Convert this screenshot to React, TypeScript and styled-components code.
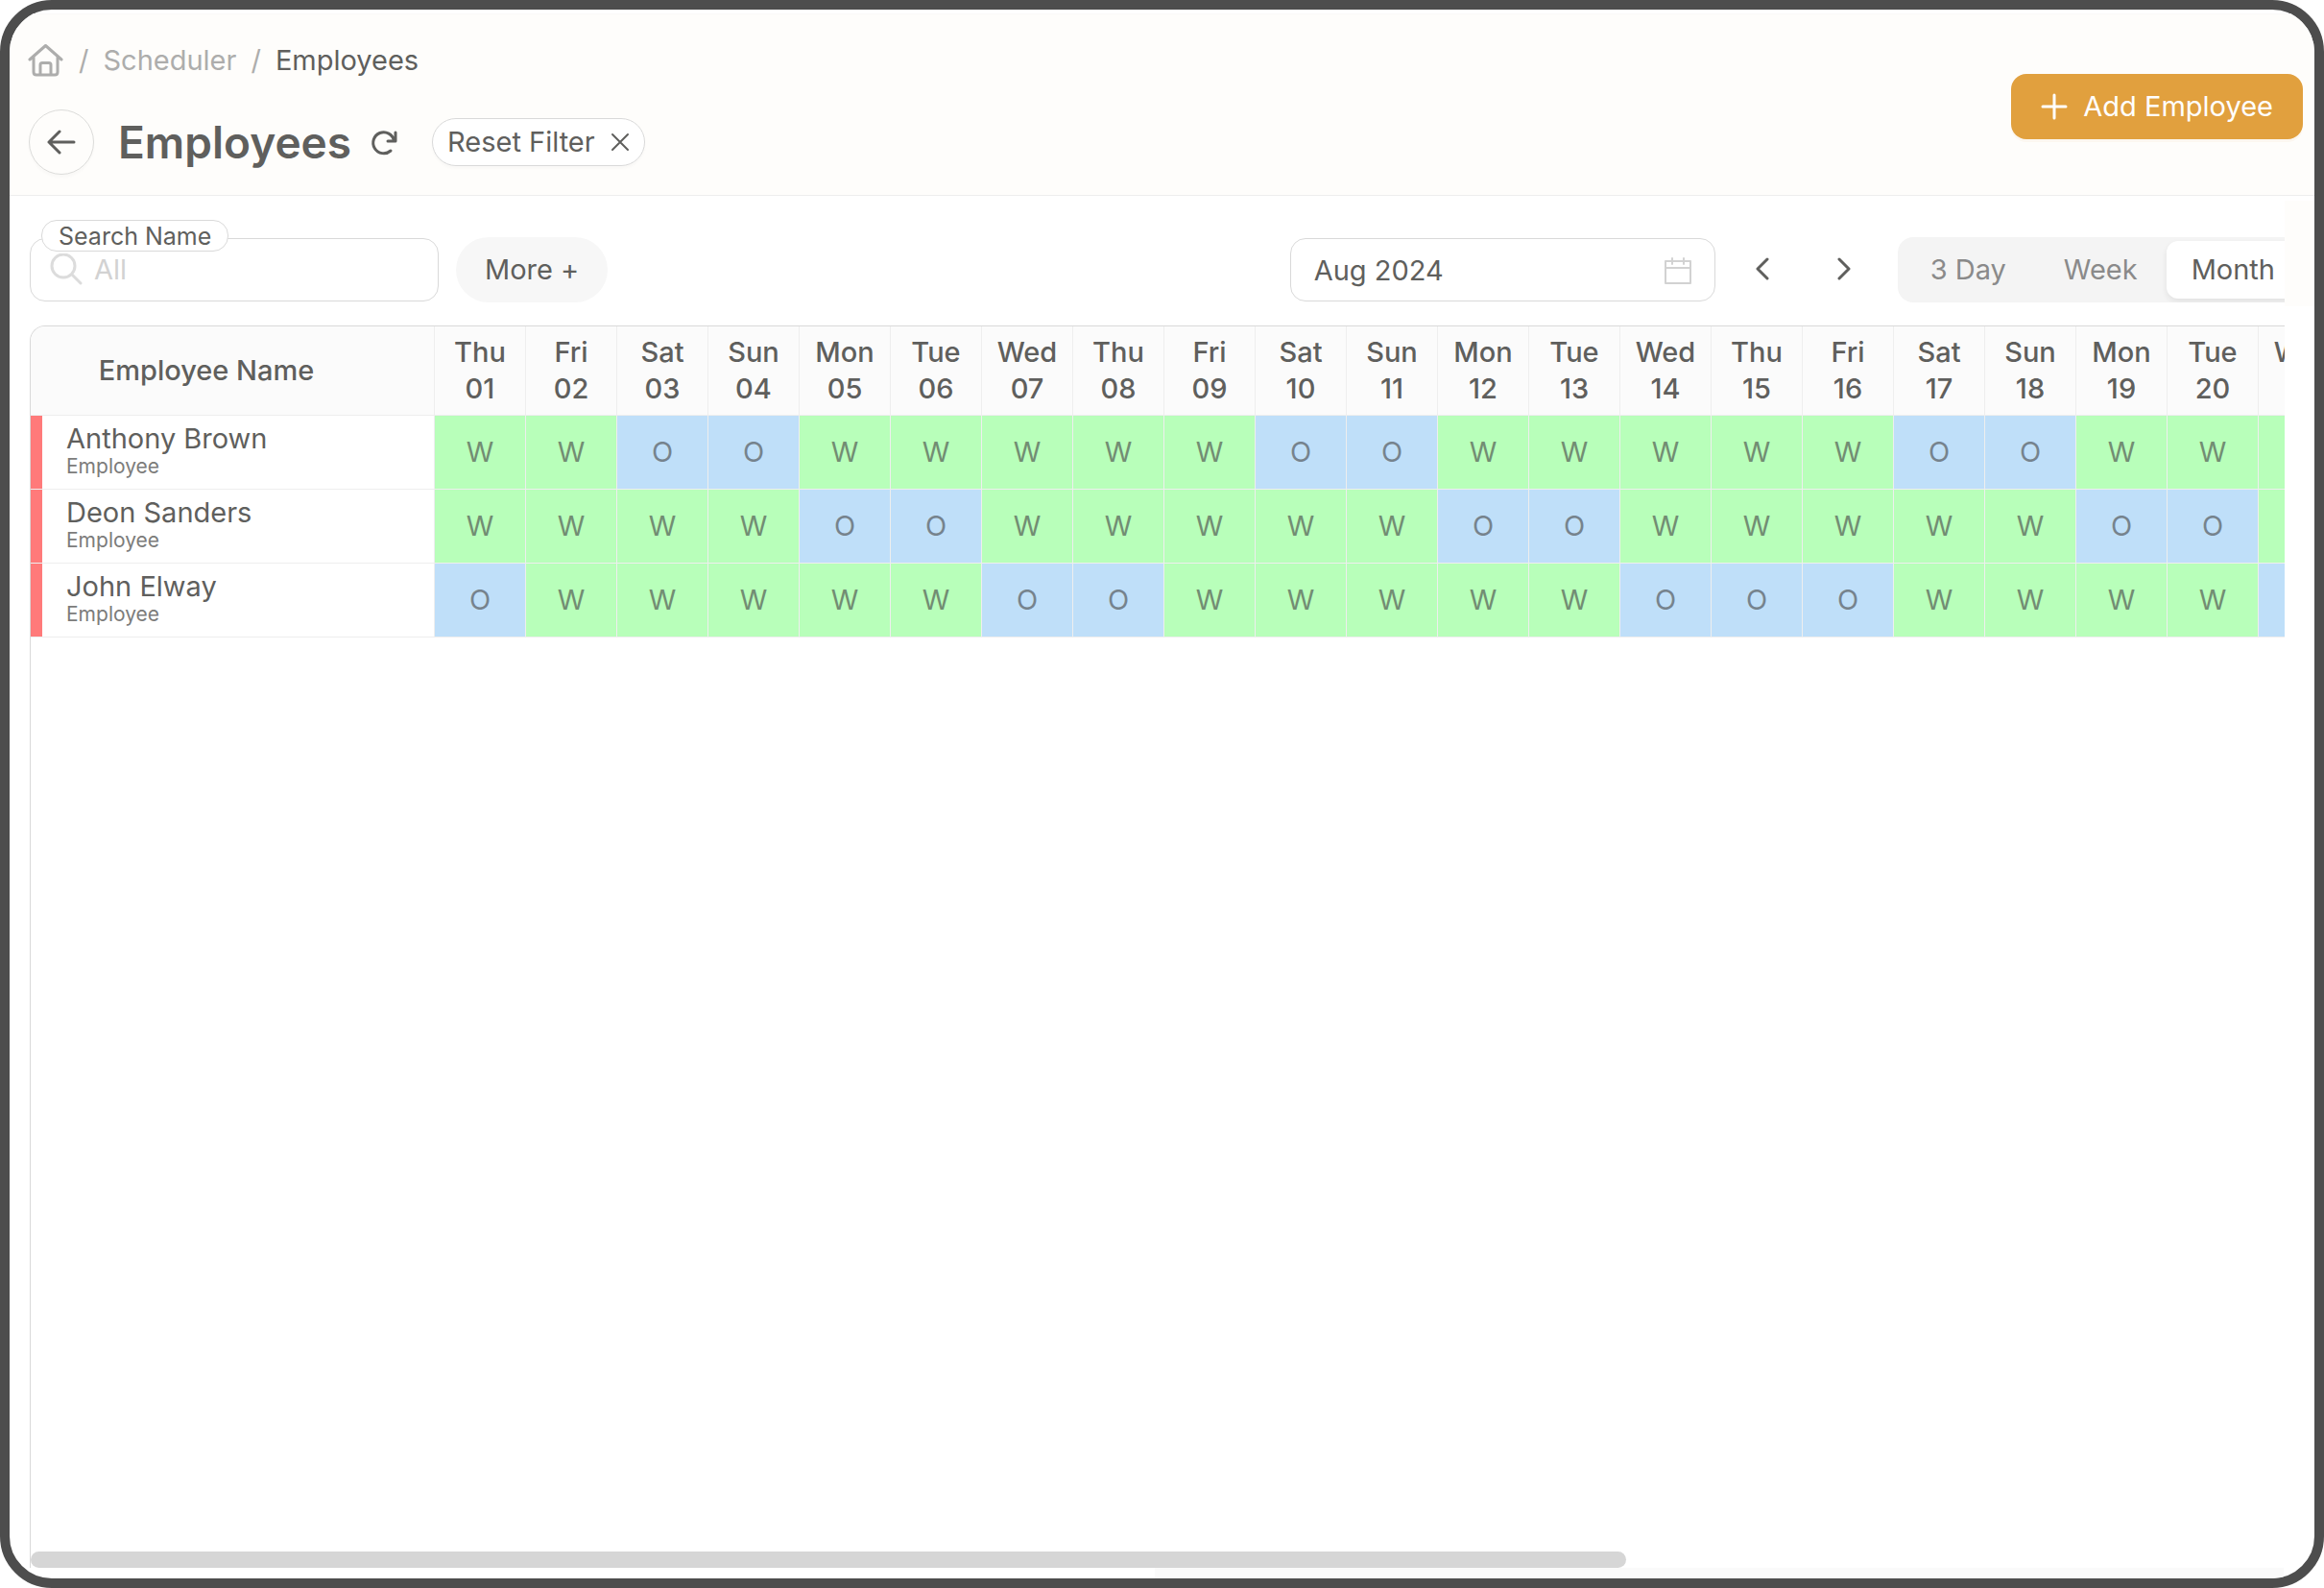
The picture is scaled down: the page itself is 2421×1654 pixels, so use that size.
import React, { useState } from 'react';
import styled, { createGlobalStyle } from 'styled-components';

const GlobalStyle = createGlobalStyle`
  *, *::before, *::after { box-sizing: border-box; }
  body {
    margin: 0;
    background: #fff;
    color: #5f5f5d;
    font-family: Inter, "Liberation Sans", sans-serif;
    font-size: 29px;
    line-height: 38px;
  }
  button, input { font: inherit; color: inherit; }
  button { cursor: pointer; }
`;

const Frame = styled.div`
  display: flex;
  flex-direction: column;
  height: 100vh;
  padding-top: 4px;
  border: 10px solid #4d4d4d;
  border-radius: 54px;
  background: #fff;
  overflow: hidden;
`;

const Header = styled.header`
  display: flex;
  justify-content: space-between;
  align-items: flex-start;
  padding: 29px 12px 21px 19px;
  border-top: 1px solid #faf9f8;
  border-bottom: 1px solid #eeeeee;
  background: #fefdfb;
`;

const Breadcrumb = styled.nav`
  display: flex;
  align-items: center;
  gap: 15px;
  height: 38px;
  color: #adadac;
`;

const CrumbLink = styled.a`
  display: flex;
  color: #adadac;
  text-decoration: none;
`;

const CrumbCurrent = styled.span`
  color: #5f5f5d;
`;

const TitleRow = styled.div`
  display: flex;
  align-items: center;
  gap: 20px;
  margin-top: 32px;
  padding-left: 1px;
`;

const BackButton = styled.button`
  display: grid;
  place-items: center;
  width: 68px;
  height: 68px;
  margin-right: 5px;
  padding: 0;
  border: 1px solid #dcdcda;
  border-radius: 50%;
  background: #fefdfb;
  box-shadow: 0 3px 3px rgba(0, 0, 0, 0.02);
`;

const Title = styled.h1`
  margin: 0;
  font-size: 46px;
  line-height: 60px;
  font-weight: 600;
`;

const IconButton = styled.button`
  display: grid;
  place-items: center;
  padding: 0;
  border: 0;
  background: none;
`;

const ResetButton = styled.button`
  display: flex;
  align-items: center;
  gap: 16px;
  height: 50px;
  margin-left: 16px;
  padding: 0 15px;
  border: 1px solid #d9d9d9;
  border-radius: 25px;
  background: #fff;
  box-shadow: 0 3px 3px rgba(0, 0, 0, 0.02);
`;

const AddButton = styled.button`
  display: flex;
  align-items: center;
  gap: 16px;
  height: 68px;
  margin-top: 33px;
  padding: 0 31px;
  border: 0;
  border-radius: 16px;
  background: #e1a03e;
  color: #fff;
  box-shadow: 0 3px 0 rgba(225, 160, 62, 0.06);
`;

const Workspace = styled.main`
  display: flex;
  flex: 1;
  flex-direction: column;
  min-height: 0;
  padding: 43px 31px 11px 21px;
  background:
    linear-gradient(#fefdfb, #fefdfb) right 0 top 5px / 31px 110px no-repeat,
    linear-gradient(#fafafa, #fafafa) right 32px bottom 0 / 49% 11px no-repeat;
`;

const Toolbar = styled.div`
  display: flex;
  align-items: center;
  gap: 18px;
  height: 68px;
`;

const SearchField = styled.div`
  position: relative;
  display: flex;
  align-items: center;
  gap: 12px;
  width: 426px;
  height: 66px;
  padding: 0 20px;
  border: 1px solid #d9d9d9;
  border-radius: 16px;
  background: #fff;
`;

const SearchLabel = styled.label`
  position: absolute;
  top: -20px;
  left: 11px;
  height: 33px;
  padding: 0 17px;
  border: 1px solid #d9d9d9;
  border-radius: 16px;
  background: #fff;
  font-size: 25px;
  line-height: 32px;
`;

const TextInput = styled.input`
  flex: 1;
  min-width: 0;
  padding: 0;
  border: 0;
  outline: 0;
  background: none;
  &::placeholder { color: #d2d2d2; opacity: 1; }
`;

const MoreButton = styled.button`
  height: 68px;
  padding: 0 30px;
  border: 0;
  border-radius: 34px;
  background: #f7f7f7;
`;

const DateControls = styled.div`
  display: flex;
  flex: none;
  align-items: center;
  margin-left: auto;
  overflow: hidden;
`;

const DateField = styled.label`
  display: flex;
  align-items: center;
  width: 443px;
  height: 66px;
  margin-right: 23px;
  padding: 2px 24px 0;
  border: 1px solid #d9d9d9;
  border-radius: 16px;
  background: #fff;
`;

const Stepper = styled.div`
  display: flex;
  gap: 33px;
  margin-right: 30px;
`;

const StepButton = styled(IconButton)`
  width: 52px;
  height: 52px;
`;

/* The switch runs past the right edge of the toolbar and is clipped there. */
const Segments = styled.div`
  display: flex;
  height: 68px;
  margin-right: -20px;
  padding: 4px;
  border-radius: 16px;
  background: #f4f4f4;
`;

const Segment = styled.button<{ $active: boolean }>`
  padding: 0 ${(p) => (p.$active ? 26 : 30)}px;
  border: 0;
  border-radius: 12px;
  background: ${(p) => (p.$active ? '#fff' : 'transparent')};
  color: ${(p) => (p.$active ? '#5f5f5d' : '#8a8a8a')};
  box-shadow: ${(p) => (p.$active ? '0 3px 6px rgba(0, 0, 0, 0.08)' : 'none')};
`;

const Scheduler = styled.section`
  display: flex;
  flex: 1;
  flex-direction: column;
  justify-content: space-between;
  min-height: 0;
  margin-top: 24px;
  border-top: 1px solid #d9d9d9;
  border-left: 1px solid #d9d9d9;
  border-top-left-radius: 16px;
  background: #fff;
  overflow: hidden;
`;

const Grid = styled.table`
  width: 2416px;
  table-layout: fixed;
  border-collapse: separate;
  border-spacing: 0;
`;

const NameHead = styled.th`
  width: 421px;
  height: 93px;
  padding: 0 54px 0 0;
  border-right: 1px solid #eeeeee;
  border-bottom: 1px solid #eeeeee;
  background: #fbfbfb;
  font-weight: 500;
`;

const DayHead = styled.th`
  width: 95px;
  height: 93px;
  padding: 0;
  border-right: 1px solid #eeeeee;
  border-bottom: 1px solid #eeeeee;
  background: #fbfbfb;
  font-weight: 500;
`;

const NameCell = styled.th`
  height: 77px;
  padding: 0 0 3px 37px;
  border-right: 1px solid #eeeeee;
  border-bottom: 1px solid #eeeeee;
  box-shadow: inset 12px 0 #ff7a7a;
  font-weight: 400;
  text-align: left;
`;

const PersonName = styled.div`
  line-height: 32px;
`;

const Role = styled.div`
  color: #7c7c7b;
  font-size: 21px;
  line-height: 25px;
`;

const ShiftCell = styled.td<{ $off: boolean }>`
  padding: 0;
  border-right: 1px solid #eeeeee;
  border-bottom: 1px solid #eeeeee;
  background: ${(p) => (p.$off ? '#bfdff9' : '#b8ffba')};
  color: ${(p) => (p.$off ? '#76838d' : '#728d73')};
  text-align: center;
`;

const ScrollThumb = styled.div`
  width: 70.8%;
  height: 17px;
  border-radius: 9px;
  background: #d6d6d6;
`;

const Svg = ({ size, width = 2, children, color = 'currentColor' }: {
  size: number; width?: number; color?: string; children: React.ReactNode;
}) => (
  <svg width={size} height={size} viewBox={`0 0 ${size} ${size}`} fill="none" stroke={color}
    strokeWidth={width} strokeLinecap="round" strokeLinejoin="round" aria-hidden="true">
    {children}
  </svg>
);

const HomeIcon = () => (
  <Svg size={38} width={3}>
    <path d="M2 18 L18.5 3.5 L35 18 M6 15.5 V31 Q6 34 9 34 H28 Q31 34 31 31 V15.5 M13 34 V23.5 Q13 21.5 15 21.5 H22 Q24 21.5 24 23.5 V34" />
  </Svg>
);

const WEEKDAYS = ['Wed', 'Thu', 'Fri', 'Sat', 'Sun', 'Mon', 'Tue'];
const DAYS = Array.from({ length: 21 }, (_, i) => i + 1);

const EMPLOYEES = [
  { name: 'Anthony Brown', role: 'Employee', off: [3, 4, 10, 11, 17, 18] },
  { name: 'Deon Sanders', role: 'Employee', off: [5, 6, 12, 13, 19, 20] },
  { name: 'John Elway', role: 'Employee', off: [1, 7, 8, 14, 15, 16, 21] },
];

const VIEWS = ['3 Day', 'Week', 'Month'];

export default function App() {
  const [view, setView] = useState('Month');
  const [query, setQuery] = useState('');

  return (
    <>
      <GlobalStyle />
      <Frame>
        <Header>
          <div>
            <Breadcrumb aria-label="Breadcrumb">
              <CrumbLink href="#home" aria-label="Home"><HomeIcon /></CrumbLink>
              <span>/</span>
              <CrumbLink href="#scheduler">Scheduler</CrumbLink>
              <span>/</span>
              <CrumbCurrent>Employees</CrumbCurrent>
            </Breadcrumb>
            <TitleRow>
              <BackButton aria-label="Back">
                <Svg size={30} width={3}><path d="M28 15 H2 M13 4 L2 15 L13 26" /></Svg>
              </BackButton>
              <Title>Employees</Title>
              <IconButton aria-label="Refresh">
                <Svg size={28} width={3}>
                  <path d="M21 23 A11 11 0 1 1 24.5 12.5 M26 4 V13 H18" />
                </Svg>
              </IconButton>
              <ResetButton>
                Reset Filter
                <Svg size={20} width={2}><path d="M2 2 L18 18 M18 2 L2 18" /></Svg>
              </ResetButton>
            </TitleRow>
          </div>
          <AddButton>
            <Svg size={28} width={3}><path d="M14 2 V26 M2 14 H26" /></Svg>
            Add Employee
          </AddButton>
        </Header>

        <Workspace>
          <Toolbar>
            <SearchField>
              <SearchLabel htmlFor="search-name">Search Name</SearchLabel>
              <Svg size={34} width={3} color="#dcdcdc">
                <circle cx="14" cy="13" r="12" /><path d="M23 22 L32 31" />
              </Svg>
              <TextInput id="search-name" placeholder="All" value={query}
                onChange={(e) => setQuery(e.target.value)} />
            </SearchField>
            <MoreButton>More +</MoreButton>
            <DateControls>
              <DateField>
                <TextInput aria-label="Month" defaultValue="Aug 2024" />
                <Svg size={28} width={2} color="#d2d2d2">
                  <path d="M1 4 H27 V27 H1 Z M1 11 H27 M8 1 V7 M20 1 V7" />
                </Svg>
              </DateField>
              <Stepper>
                <StepButton aria-label="Previous month">
                  <Svg size={26} width={3}><path d="M18 2 L8 12 L18 22" /></Svg>
                </StepButton>
                <StepButton aria-label="Next month">
                  <Svg size={26} width={3}><path d="M8 2 L18 12 L8 22" /></Svg>
                </StepButton>
              </Stepper>
              <Segments>
                {VIEWS.map((v) => (
                  <Segment key={v} $active={v === view} aria-pressed={v === view}
                    onClick={() => setView(v)}>{v}</Segment>
                ))}
              </Segments>
            </DateControls>
          </Toolbar>

          <Scheduler aria-label="Schedule">
            <Grid>
              <thead>
                <tr>
                  <NameHead scope="col">Employee Name</NameHead>
                  {DAYS.map((d) => (
                    <DayHead key={d} scope="col">
                      <div>{WEEKDAYS[d % 7]}</div>
                      <div>{String(d).padStart(2, '0')}</div>
                    </DayHead>
                  ))}
                </tr>
              </thead>
              <tbody>
                {EMPLOYEES.map((e) => (
                  <tr key={e.name}>
                    <NameCell scope="row">
                      <PersonName>{e.name}</PersonName>
                      <Role>{e.role}</Role>
                    </NameCell>
                    {DAYS.map((d) => (
                      <ShiftCell key={d} $off={e.off.includes(d)}>
                        {e.off.includes(d) ? 'O' : 'W'}
                      </ShiftCell>
                    ))}
                  </tr>
                ))}
              </tbody>
            </Grid>
            <ScrollThumb />
          </Scheduler>
        </Workspace>
      </Frame>
    </>
  );
}
